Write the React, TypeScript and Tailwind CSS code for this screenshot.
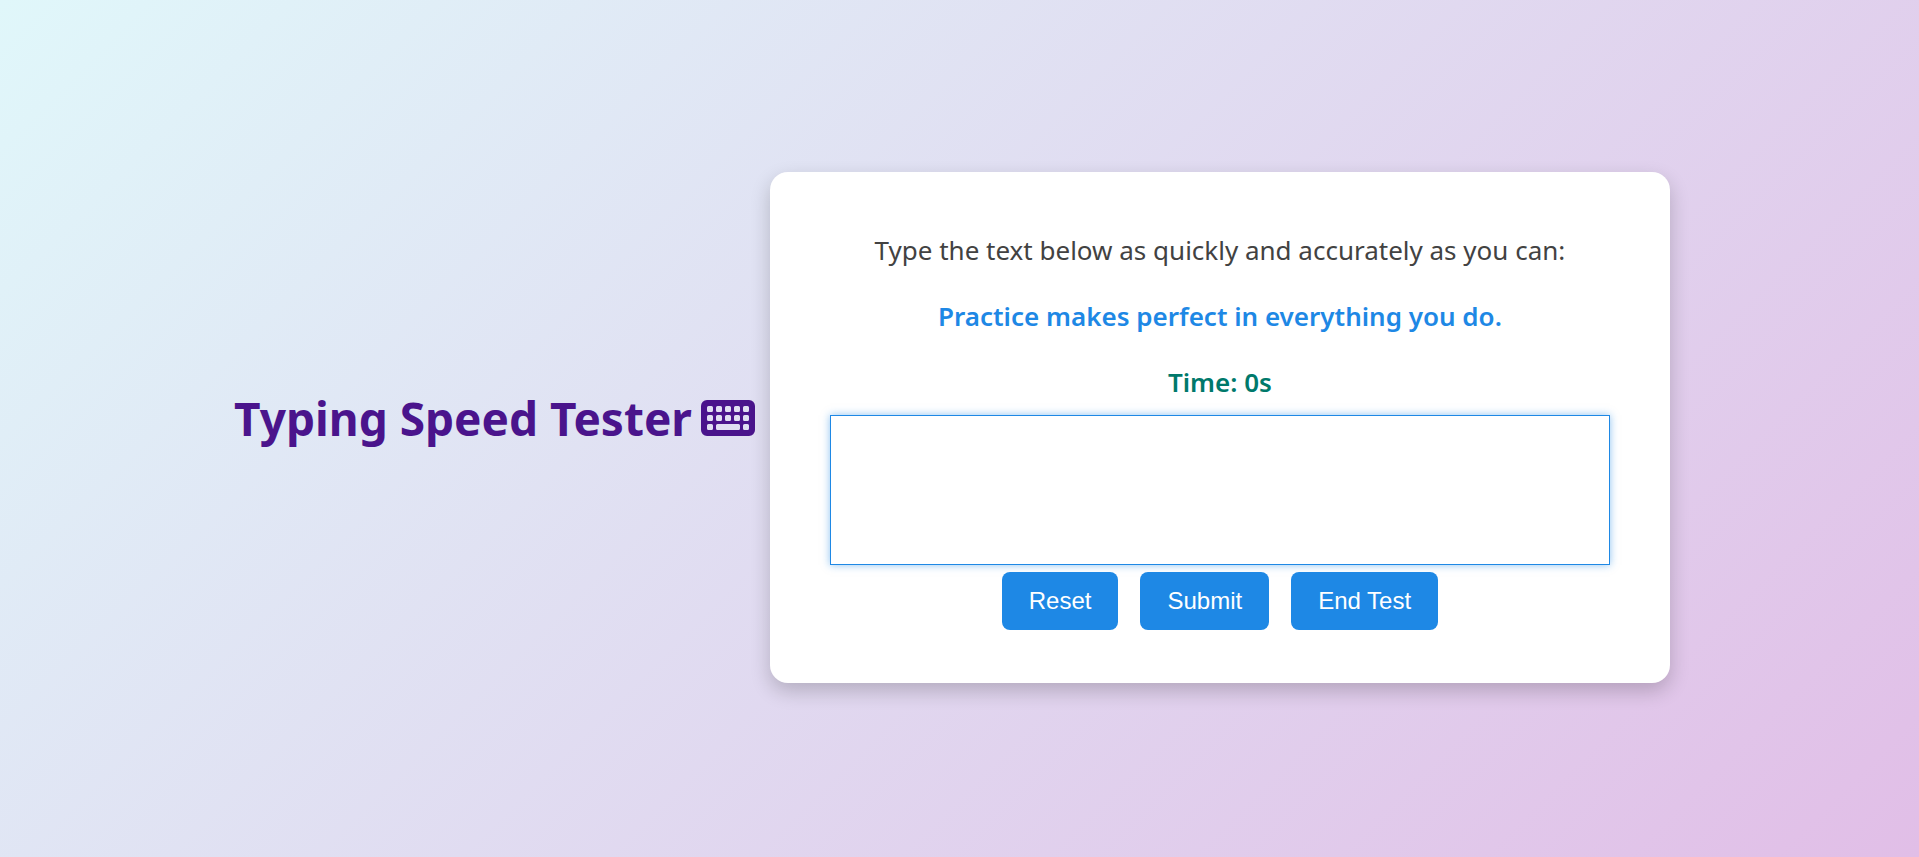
import { useEffect, useState } from 'react';

const SENTENCE = 'Practice makes perfect in everything you do.';

const BUTTON =
  'cursor-pointer rounded-lg bg-[#1e88e5] px-[27px] py-[13px] font-["Liberation_Sans",Arial,sans-serif] text-2xl leading-8 text-white hover:bg-[#1565c0]';

function roundedRect(x: number, y: number, w: number, h: number, r: number) {
  return `M${x + r} ${y}h${w - 2 * r}a${r} ${r} 0 0 1 ${r} ${r}v${h - 2 * r}a${r} ${r} 0 0 1 ${-r} ${r}h${2 * r - w}a${r} ${r} 0 0 1 ${-r} ${-r}v${2 * r - h}a${r} ${r} 0 0 1 ${r} ${-r}z`;
}

const KEYBOARD = [
  roundedRect(0, 0, 576, 384, 64),
  ...[64, 160, 256, 352, 448].flatMap((x) => [64, 160].map((y) => roundedRect(x, y, 64, 64, 16))),
  roundedRect(64, 256, 64, 64, 16),
  roundedRect(160, 256, 256, 64, 16),
  roundedRect(448, 256, 64, 64, 16),
].join('');

function KeyboardIcon() {
  return (
    <svg viewBox="0 0 576 384" className="inline-block h-9 w-[54px] shrink-0" fill="currentColor" fillRule="evenodd" aria-hidden="true">
      <path d={KEYBOARD} />
    </svg>
  );
}

export default function App() {
  const [text, setText] = useState('');
  const [seconds, setSeconds] = useState(0);
  const [running, setRunning] = useState(false);

  useEffect(() => {
    if (!running) return;
    const id = setInterval(() => setSeconds((s) => s + 1), 1000);
    return () => clearInterval(id);
  }, [running]);

  const reset = () => {
    setText('');
    setSeconds(0);
    setRunning(false);
  };

  return (
    <main className='flex min-h-screen items-center justify-center bg-linear-[135deg,#e0f7fa,#e1bee7] pb-0.5 font-["Noto_Sans","Open_Sans",sans-serif]'>
      <h1 className="mb-5 flex items-baseline gap-[9px] text-[46px] leading-[64px] font-bold whitespace-nowrap text-[#4a148c]">
        Typing Speed Tester
        <KeyboardIcon />
      </h1>
      <section className="mx-[15px] flex w-full max-w-[900px] flex-col items-center rounded-[18px] bg-white px-[60px] pt-[60px] pb-[53px] text-center text-[26px] leading-9 shadow-[0_8px_20px_rgba(0,0,0,0.2)]">
        <label htmlFor="typed" className="text-[#424242]">
          Type the text below as quickly and accurately as you can:
        </label>
        <p className="mt-[30px] font-semibold text-[#1e88e5]">{SENTENCE}</p>
        <p className="mt-[30px] font-semibold text-[#00796b]">Time: {seconds}s</p>
        <textarea
          id="typed"
          value={text}
          onChange={(e) => {
            setText(e.target.value);
            setRunning(true);
          }}
          className="mt-[15px] h-[150px] w-full resize-none border border-[#1e88e5] p-4 text-2xl text-[#424242] shadow-[0_0_8px_rgba(30,136,229,0.5)] outline-none"
        />
        <div className="mt-[7px] flex gap-[22px]">
          <button type="button" className={BUTTON} onClick={reset}>
            Reset
          </button>
          <button type="button" className={BUTTON} onClick={() => setRunning(false)}>
            Submit
          </button>
          <button type="button" className={BUTTON} onClick={() => setRunning(false)}>
            End Test
          </button>
        </div>
      </section>
    </main>
  );
}
